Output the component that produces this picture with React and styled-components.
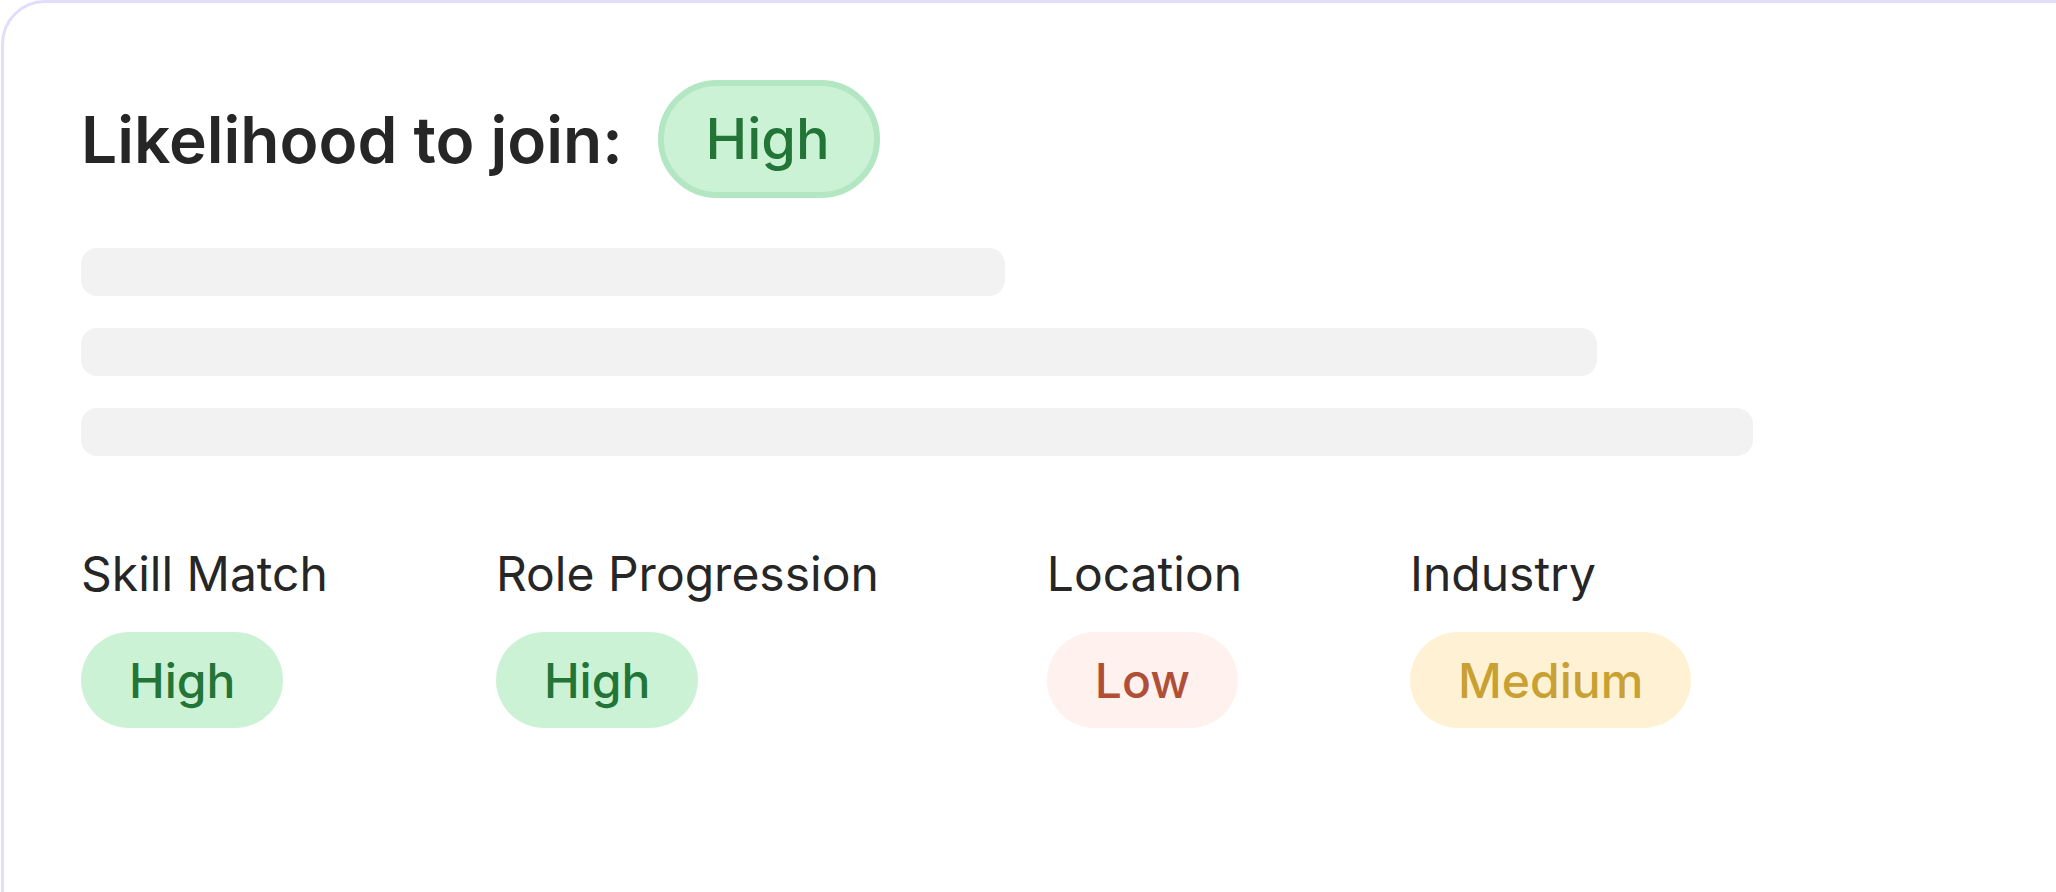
import React from 'react';
import styled, { createGlobalStyle } from 'styled-components';

const GlobalStyle = createGlobalStyle`
  html, body { margin: 0; padding: 0; background: #ffffff; overflow: hidden; }
  body { font-family: Inter, "Noto Sans", "Liberation Sans", sans-serif; }
`;

const Card = styled.div`
  box-sizing: border-box;
  width: calc(100vw + 60px);
  min-height: 1000px;
  margin-left: 1px;
  border: 3px solid #e3dcfb;
  border-radius: 44px;
  padding: 77px 0 0 77px;
  background: #ffffff;
`;

const TitleRow = styled.div`
  display: flex;
  align-items: center;
  gap: 35px;
`;

const Title = styled.h2`
  margin: 0;
  padding-top: 3px;
  font-size: 64px;
  font-weight: 600;
  line-height: 1.2;
  color: #262626;
`;

const tones = {
  high: { bg: '#ccf2d6', fg: '#237537', border: '#b3e6c3' },
  low: { bg: '#fff1ee', fg: '#b04f38', border: '#ffe0d9' },
  medium: { bg: '#fff2d4', fg: '#c9a032', border: '#fbe3ad' },
};

const BigPill = styled.span`
  box-sizing: border-box;
  display: inline-flex;
  align-items: center;
  height: 118px;
  padding: 0 44px 0 42px;
  border: 6px solid ${(p) => tones[p.tone].border};
  border-radius: 999px;
  background: ${(p) => tones[p.tone].bg};
  color: ${(p) => tones[p.tone].fg};
  font-size: 56px;
  font-weight: 500;
`;

const Bars = styled.div`
  display: flex;
  flex-direction: column;
  gap: 32px;
  margin-top: 50px;
`;

const Bar = styled.div`
  height: 48px;
  border-radius: 16px;
  background: #f2f2f2;
`;

const Factors = styled.div`
  display: flex;
  gap: 168px;
  margin-top: 82px;
`;

const Factor = styled.div`
  display: flex;
  flex-direction: column;
  align-items: flex-start;
  gap: 22px;
`;

const FactorLabel = styled.div`
  font-size: 48px;
  line-height: 72px;
  font-weight: 400;
  color: #262626;
`;

const Pill = styled.span`
  box-sizing: border-box;
  display: inline-flex;
  align-items: center;
  height: 96px;
  padding: 0 48px;
  border-radius: 999px;
  background: ${(p) => tones[p.tone].bg};
  color: ${(p) => tones[p.tone].fg};
  font-size: 48px;
  font-weight: 500;
`;

const barWidths = [924, 1516, 1672];

const factors = [
  { label: 'Skill Match', value: 'High', tone: 'high' },
  { label: 'Role Progression', value: 'High', tone: 'high' },
  { label: 'Location', value: 'Low', tone: 'low' },
  { label: 'Industry', value: 'Medium', tone: 'medium' },
];

export default function App() {
  return (
    <>
      <GlobalStyle />
      <Card>
        <TitleRow>
          <Title>Likelihood to join:</Title>
          <BigPill tone="high">High</BigPill>
        </TitleRow>
        <Bars>
          {barWidths.map((w, i) => (
            <Bar key={i} style={{ width: w }} />
          ))}
        </Bars>
        <Factors>
          {factors.map((f) => (
            <Factor key={f.label}>
              <FactorLabel>{f.label}</FactorLabel>
              <Pill tone={f.tone}>{f.value}</Pill>
            </Factor>
          ))}
        </Factors>
      </Card>
    </>
  );
}
